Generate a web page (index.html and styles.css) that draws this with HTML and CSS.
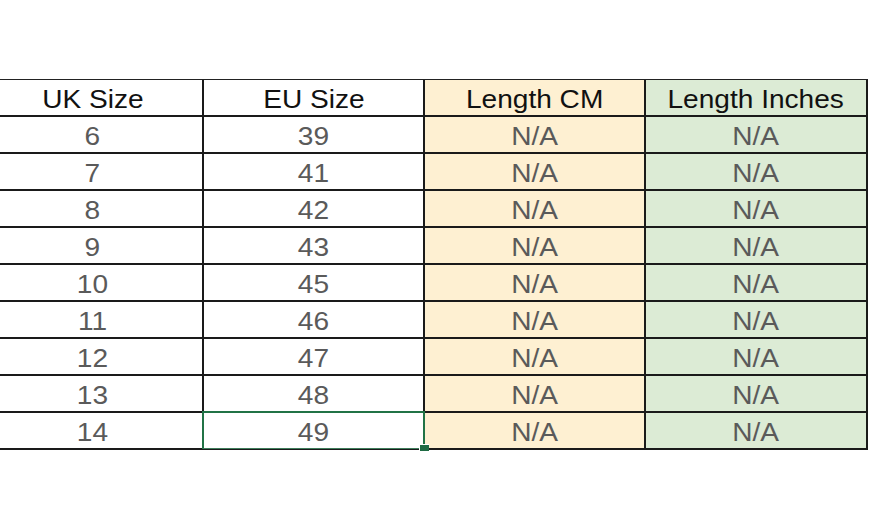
FILE: index.html
```html
<!DOCTYPE html>
<html lang="en">
<head>
<meta charset="utf-8">
<title>Size Chart</title>
<link rel="stylesheet" href="styles.css">
</head>
<body>
<div class="sheet">
  <div class="grid">
    <div class="cell head"><span>UK Size</span></div>
    <div class="cell head"><span>EU Size</span></div>
    <div class="cell head cm"><span>Length CM</span></div>
    <div class="cell head inch"><span>Length Inches</span></div>

    <div class="cell"><span>6</span></div><div class="cell"><span>39</span></div><div class="cell cm"><span>N/A</span></div><div class="cell inch"><span>N/A</span></div>
    <div class="cell"><span>7</span></div><div class="cell"><span>41</span></div><div class="cell cm"><span>N/A</span></div><div class="cell inch"><span>N/A</span></div>
    <div class="cell"><span>8</span></div><div class="cell"><span>42</span></div><div class="cell cm"><span>N/A</span></div><div class="cell inch"><span>N/A</span></div>
    <div class="cell"><span>9</span></div><div class="cell"><span>43</span></div><div class="cell cm"><span>N/A</span></div><div class="cell inch"><span>N/A</span></div>
    <div class="cell"><span>10</span></div><div class="cell"><span>45</span></div><div class="cell cm"><span>N/A</span></div><div class="cell inch"><span>N/A</span></div>
    <div class="cell"><span>11</span></div><div class="cell"><span>46</span></div><div class="cell cm"><span>N/A</span></div><div class="cell inch"><span>N/A</span></div>
    <div class="cell"><span>12</span></div><div class="cell"><span>47</span></div><div class="cell cm"><span>N/A</span></div><div class="cell inch"><span>N/A</span></div>
    <div class="cell"><span>13</span></div><div class="cell"><span>48</span></div><div class="cell cm"><span>N/A</span></div><div class="cell inch"><span>N/A</span></div>
    <div class="cell"><span>14</span></div><div class="cell selected"><span>49</span><i class="frame"></i><i class="handle"></i></div><div class="cell cm"><span>N/A</span></div><div class="cell inch"><span>N/A</span></div>
  </div>
</div>
</body>
</html>
```

FILE: styles.css
```css
html, body {
  margin: 0;
  padding: 0;
  background: #ffffff;
}

body {
  font-family: "Liberation Sans", Arial, sans-serif;
  width: 870px;
  height: 524px;
  overflow: hidden;
}

.sheet {
  padding-top: 79px;
}

.grid {
  display: grid;
  grid-template-columns: 221px 221px 221px 222px;
  grid-auto-rows: 37px;
  width: 885px;
  margin-left: -17px;
  border-top: 1px solid #222;
}

.cell {
  position: relative;
  border-right: 2px solid #1a1a1a;
  border-bottom: 2px solid #1a1a1a;
  display: flex;
  align-items: center;
  justify-content: center;
  font-size: 26px;
  color: #5a5a5a;
  line-height: 1;
  padding-top: 3px;
  box-sizing: border-box;
}

.cell span {
  display: inline-block;
  transform: scaleX(1.08);
}

.head {
  color: #111111;
  font-size: 26px;
  padding-top: 2px;
}

.head span {
  transform: scaleX(1.08);
}

.cm {
  background: #fef0d2;
}

.inch {
  background: #dcebd5;
}

.selected {
  z-index: 1;
}

.frame {
  position: absolute;
  left: -2px;
  top: -2px;
  right: -2px;
  bottom: -1px;
  border: 2px solid #217346;
  border-bottom-width: 1px;
  border-bottom-color: #3f7d5c;
}

.handle {
  position: absolute;
  right: -6px;
  bottom: -3px;
  width: 9px;
  height: 6px;
  background: #1f6b44;
  border-left: 1px solid #ffffff;
  border-top: 1px solid #ffffff;
}
```
